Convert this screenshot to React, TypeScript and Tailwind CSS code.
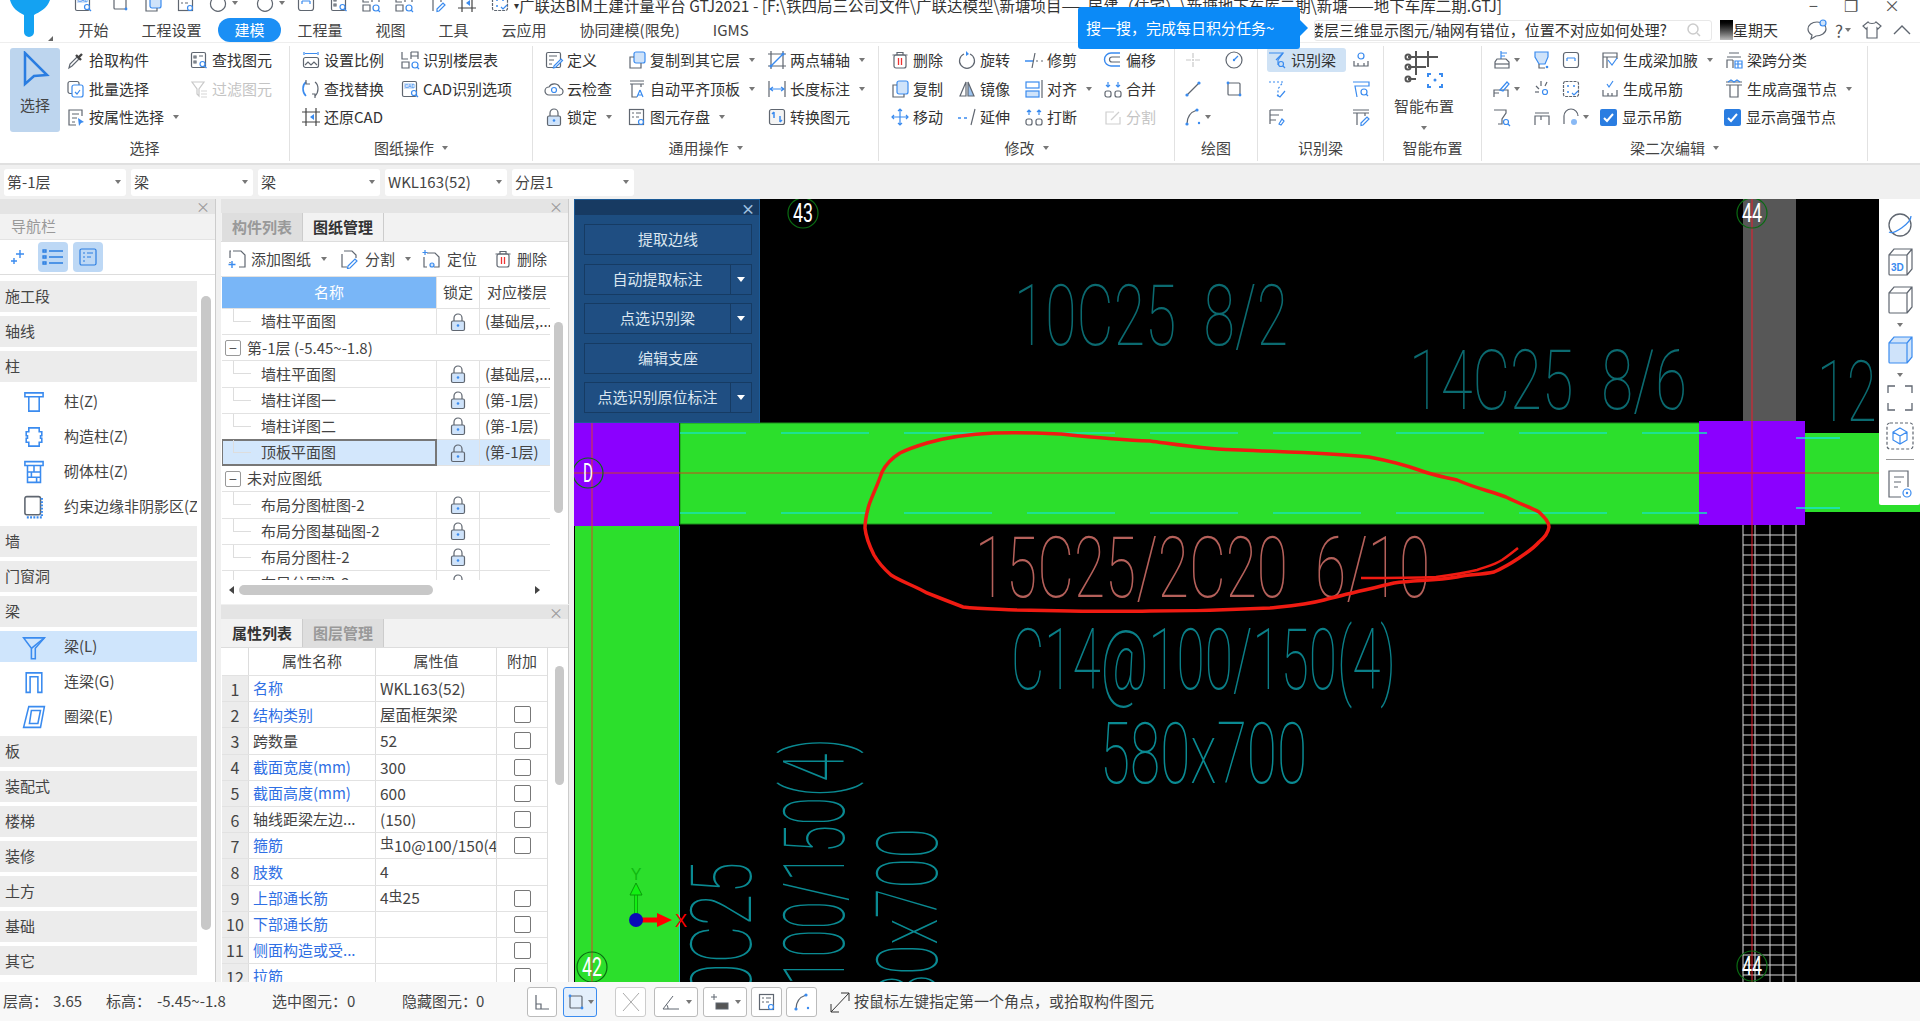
import type { ReactNode } from "react";

const G = "#5f6670";
const B = "#3a8bef";
const L = "#cfe3fa";

const paths: Record<string, ReactNode> = {
  pick: (<><path d="M3 18l1-4 7-7 2 2-7 7z" stroke={G} /><path d="M10 5l5 5M13 7l3-3" stroke="#444" strokeWidth="2.4" /></>),
  find: (<><rect x="2.5" y="2.5" width="14" height="15" rx="1.5" stroke={G} /><path d="M5 6h2v2H5zM10 6h4M5 11h2v2H5z" stroke={G} /><circle cx="13.5" cy="14" r="2.5" stroke={B} /><path d="M15.5 16l2 2" stroke={B} /></>),
  batch: (<><rect x="2" y="2.5" width="11" height="12" rx="2" stroke={G} /><rect x="6" y="6" width="11" height="12" rx="2" stroke={B} fill="#fff" /><path d="M9 13l2 2 3-4" stroke={B} /></>),
  filter: (<><path d="M3 3h12l-5 7v7l-2-2v-5z" stroke="#c9c9c9" /><path d="M12 12h6M12 15h6M12 18h6" stroke="#d5d5d5" /></>),
  attr: (<><path d="M16 9V3H3v15h7" stroke={G} /><path d="M6 7h7M6 11h5M6 15h3" stroke={G} /><path d="M12 11l6 4-3 1-2 3z" fill={B} /></>),
  scale: (<><path d="M3 2v3M17 2v3M4 3.5h12" stroke={B} /><rect x="2.5" y="7.5" width="15" height="10" rx="2" stroke={G} /><path d="M4 15l3-3 3 3 3-3 3 3" stroke={G} /></>),
  floorTable: (<><path d="M2 2v7h6M11 2h7v7M11 2v7M2 18v-6h7v6zM11 6h7" stroke={G} /><circle cx="15" cy="15" r="3" stroke={B} /><path d="M17 17l2 2" stroke={B} /></>),
  replace: (<><path d="M5 3C1 6 1 13 5 17" stroke={B} strokeWidth="1.6" /><path d="M14 3c4 3 4 10 0 14" stroke={G} /><path d="M5 1v4H9M14 19v-4h-3" stroke={G} /></>),
  cadOpt: (<><rect x="2.5" y="2.5" width="14" height="15" rx="1.5" stroke={G} /><rect x="4" y="4" width="10" height="6" fill={L} /><text x="4.5" y="9" fontSize="5" fill={B} fontFamily="Liberation Sans">CAD</text><circle cx="14" cy="14" r="2.5" stroke={B} /><path d="M16 16l2 2" stroke={B} /></>),
  restore: (<><path d="M1 5h18M1 15h18M5 1v18M15 1v18" stroke="#444" /><path d="M13 7l-4 3 4 3z" fill={B} /></>),
  define: (<><rect x="2.5" y="2.5" width="14" height="15" rx="1.5" stroke={G} /><path d="M5 6h8M5 10h5M5 14h3" stroke={G} /><path d="M10 16l7-7 1.500 1.500-7 7-2 .5z" stroke={B} fill="#fff" /></>),
  cloud: (<><path d="M5 16a4 4 0 0 1 0-8 6 6 0 0 1 11 1 3.500 3.500 0 0 1-1 7z" stroke={G} /><circle cx="10" cy="11" r="2.500" stroke={B} /></>),
  lock: (<><path d="M6 9V6a4 4 0 0 1 8 0v3" stroke={G} /><rect x="3.500" y="9" width="13" height="9.500" rx="1.500" stroke={G} fill={L} /><circle cx="10" cy="13.500" r="1.300" fill={B} /></>),
  copyLayer: (<><rect x="7" y="2" width="11" height="11" rx="2" stroke={B} fill={L} /><path d="M7 7H3v11h11v-5" stroke={G} /></>),
  autoTop: (<><path d="M3 2h14M3 5h14M5 5v13h5M14 5v3" stroke={G} /><path d="M13 11l-3 7M13 11l3 7M11 16h4" stroke={B} /></>),
  save: (<><rect x="2.500" y="2.500" width="14" height="15" stroke={G} /><path d="M5 6h2M9 6h5M5 10h2M9 10h3" stroke={G} /><circle cx="14" cy="15" r="2.500" stroke={B} /></>),
  twoAxis: (<><path d="M4 1v18M16 1v18M1 4h18M1 16h18" stroke={G} /><path d="M4 16L16 4" stroke={B} strokeWidth="1.500" /><circle cx="4" cy="16" r="1.500" fill={B} /><circle cx="16" cy="4" r="1.500" fill={B} /></>),
  dim: (<><path d="M2 2v16M18 2v16" stroke={G} /><path d="M3 10h14M6 8l-3 2 3 2M14 8l3 2-3 2" stroke={B} /></>),
  convert: (<><rect x="2.500" y="2.500" width="15" height="15" rx="2" stroke={G} fill="#f4f4f4" /><path d="M7 5v6M5 7l2-2M13 15V9M15 13l-2 2" stroke={B} strokeWidth="1.500" /></>),
  del: (<><rect x="4" y="5" width="12" height="13" rx="2" stroke={G} /><path d="M2.500 5h15M7 5V2.500h6V5" stroke={G} /><path d="M8.500 8v7M11.500 8v7" stroke="#e33" strokeWidth="1.300" /></>),
  rotate: (<><path d="M7 4a7.500 7.500 0 1 0 6 0" stroke={G} /><path d="M9 1l3 3-3 2z" fill={B} /></>),
  trim: (<><path d="M1 11h8" stroke={B} strokeWidth="1.500" /><path d="M12 11h2M17 11h2" stroke={G} /><path d="M11 3L8 18" stroke={G} /></>),
  offset: (<><path d="M17 3H8a6 6 0 0 0 0 13h9" stroke={B} strokeWidth="1.400" /><path d="M17 7H9a2.500 2.500 0 0 0 0 5h8" stroke={G} /></>),
  copy: (<><rect x="7" y="2" width="11" height="13" rx="2" stroke={B} fill={L} /><path d="M7 6H3v12h11v-3" stroke={G} /></>),
  mirror: (<><path d="M9 3L3 17h6z" stroke={G} /><path d="M11 3l6 14h-6z" fill="#9bc2ee" stroke={G} /></>),
  align: (<><rect x="2" y="3" width="13" height="6" stroke={B} /><rect x="2" y="12" width="13" height="6" stroke={B} fill={L} /><path d="M18 1v18" stroke={G} /></>),
  merge: (<><rect x="2" y="12" width="6" height="6" rx="2" stroke={G} /><rect x="12" y="12" width="6" height="6" rx="2" stroke={G} /><path d="M5 3v5M15 3v5M3 6l2 2 2-2M13 6l2 2 2-2" stroke={B} /></>),
  move: (<><path d="M10 2v16M2 10h16M8 4l2-2 2 2M8 16l2 2 2-2M4 8l-2 2 2 2M16 8l2 2-2 2" stroke={B} /></>),
  extend: (<><path d="M1 11h3M7 11h3" stroke={B} strokeWidth="1.400" /><path d="M18 2l-4 16" stroke={G} /></>),
  breakIt: (<><rect x="2" y="12" width="6" height="6" rx="2" stroke={G} /><rect x="12" y="12" width="6" height="6" rx="2" stroke={G} /><path d="M5 8V3M15 8V3M3 5l2-2 2 2M13 5l2-2 2 2" stroke={B} /></>),
  split: (<><path d="M17 10v7H3V5h8" stroke="#cfcfcf" /><path d="M8 13l8-8" stroke="#cfcfcf" /></>),
  point: (<><path d="M10 3v5M10 12v5M3 10h5M12 10h5" stroke="#c8c8c8" /><circle cx="10" cy="10" r="1" fill="#c8c8c8" /></>),
  gauge: (<><circle cx="10" cy="10" r="8" stroke={G} /><path d="M10 10l4-4" stroke={B} /><circle cx="10" cy="10" r="1.200" fill={B} /></>),
  line: (<><path d="M4 16L16 4" stroke={G} /><circle cx="4" cy="16" r="1.600" fill={B} /><circle cx="16" cy="4" r="1.600" fill={B} /></>),
  rect: (<><rect x="4" y="4" width="12" height="12" rx="1" stroke={G} /><circle cx="4" cy="4" r="1.400" fill={B} /><circle cx="16" cy="16" r="1.400" fill={B} /></>),
  arc: (<><path d="M4 17C4 10 8 5 14 3" stroke={G} /><circle cx="4" cy="17" r="1.600" fill={B} /><circle cx="14" cy="3" r="1.600" fill={B} /><circle cx="16" cy="16" r="1.200" fill={B} /></>),
  beamIcon: (<><path d="M2 3h16l-7 8v8H8v-8z" stroke={B} /><path d="M8 11L18 3" stroke={B} /></>),
  beamFind: (<><path d="M2 3h14l-5 7v5" stroke={B} /><path d="M9 10L16 3" stroke={B} /><circle cx="14" cy="14" r="2.500" stroke={B} /><path d="M16 16l2 2" stroke={B} /></>),
  beamDash: (<><path d="M2 3h14l-5 7v8" stroke={B} strokeDasharray="2 2" /><path d="M10 16l3 2 5-6" stroke={B} /></>),
  beamList: (<><path d="M3 3v14M3 3h13M3 8h9M3 13h6" stroke={G} /><path d="M12 17l3-5 2 2-3 4z" stroke={B} /></>),
  support: (<><circle cx="10" cy="6" r="3" stroke={B} /><path d="M3 11v5h14v-5M7 16v-3M13 16v-3" stroke={G} /></>),
  drawFind: (<><path d="M2 3h16v4H4l2 11" stroke={B} /><circle cx="13" cy="13" r="3" stroke={B} /><path d="M15 15l2 2" stroke={B} /></>),
  pen: (<><path d="M2 3h16M2 6h16M6 6v12M14 6v3" stroke={G} /><path d="M10 16l6-6 2 2-6 6-2 .5z" stroke={B} /></>),
  haunch: (<><path d="M3 18V3h14v6M3 7h14M7 7v11" stroke={G} /><path d="M8 10l4 5 5-7" stroke={B} /></>),
  colBlue: (<><path d="M3 2h13v5l-3 7H7L3 7z" stroke={B} fill={L} /><path d="M7 14v4h6" stroke={G} /><circle cx="15" cy="17" r="1.300" fill={B} /></>),
  layerBox: (<><rect x="2.500" y="2.500" width="15" height="15" rx="2.500" stroke={G} /><path d="M6 8h8M6 8v3M14 8v3" stroke={B} /></>),
  flagBox: (<><path d="M9 1v8M9 3l6 0M9 6l4 0" stroke={B} /><path d="M5 9h9l3 3v6H3v-6z" stroke={G} /><path d="M3 14h14" stroke={G} /></>),
  hammer: (<><path d="M2 18v-7h14v7M2 14h5" stroke={G} /><path d="M8 11l7-8 2 2-6 7z" stroke={B} /></>),
  spark: (<><path d="M4 7l3 3M15 3l-2 4M9 2v5" stroke={G} /><circle cx="13" cy="13" r="2.500" stroke={B} /><path d="M3 13h4" stroke={G} /></>),
  dots: (<><rect x="2.500" y="2.500" width="15" height="15" rx="2" stroke={G} strokeDasharray="3 1" /><circle cx="7" cy="7" r="1" fill={B} /><circle cx="13" cy="7" r="1" fill={B} /><circle cx="7" cy="13" r="1" fill={B} /><path d="M11 14l2 2 4-4" stroke={B} /></>),
  hang: (<><path d="M3 11v6h14v-6M8 17v-3M12 17v-3" stroke={G} /><path d="M7 5l2 3 4-6" stroke={B} /></>),
  tBeam: (<><path d="M2 3h16M2 6h16M6 6v12h8V6" stroke={G} /><path d="M4 3l3-2 3 2 3-2 3 2" stroke={B} /></>),
  hBeam: (<><path d="M3 7h14M5 3h10M3 18v-8h6M9 10v8" stroke={G} /><path d="M11 11h7v7h-7zM11 14h7M14 11v7" stroke={B} /></>),
  arch: (<><path d="M3 17V9a7 7 0 0 1 14 0" stroke={G} /><circle cx="13" cy="15" r="3" fill={B} opacity=".6" /></>),
  funnelFind: (<><path d="M2 3h12v3l-4 6v5H6" stroke={G} /><circle cx="14" cy="15" r="2.500" stroke={B} /><path d="M16 17l2 2" stroke={B} /></>),
  floorBeam: (<><path d="M3 6h14M3 18v-9h14v9M9 9v4" stroke={G} /></>),
  addSheet: (<><path d="M6 2h8l4 4v12h-6M3 9V2h1M3 13v1" stroke={G} /><path d="M5 12v7M1.500 15.500h7" stroke={B} strokeWidth="1.400" /></>),
  cutSheet: (<><path d="M5 2h8l4 4v3M3 5v13h5" stroke={G} /><path d="M9 17l7-7 2 2-7 7-2.500.5z" stroke={B} /></>),
  locate: (<><path d="M6 4h8l4 4v10h-5M3 8v10h3" stroke={G} /><path d="M4 1v5M1.500 3.500h5" stroke={B} /><circle cx="11" cy="16" r="2" fill={L} stroke={B} /></>),
  colT: (<><path d="M3 3h14v3H3zM6 6v11h8V6" stroke={B} /></>),
  colBump: (<><path d="M6 3h8v3h2v3h-1v2h1v3h-2v3H6v-3H4v-3h1V9H4V6h2z" stroke={B} /></>),
  colBrick: (<><path d="M3 2h14v3H3zM5 5v13h10V5M5 10h10M5 14h10M10 5v5M8 10v4M12 14v4" stroke={B} /></>),
  colEdge: (<><rect x="3" y="2" width="12" height="14" rx="1.500" stroke={G} /><path d="M16 3v15H4" stroke={B} strokeWidth="1.800" strokeDasharray="1.500 1" /></>),
  beamLink: (<><path d="M4 18V3h12v15h-3V6H7v12z" stroke={B} /></>),
  beamRing: (<><path d="M6 2h12l-3 16H2zM8 5h7l-2 10H6.500z" stroke={B} /></>),
  corner: (<><path d="M4 3v14h13M4 12h5v5" stroke={G} /></>),
};

function Icon({ name, size = 20 }: { name: string; size?: number }) {
  return (
    <svg width={size} height={size} viewBox="0 0 20 20" fill="none" strokeWidth="1.200" className="shrink-0">
      {paths[name]}
    </svg>
  );
}

function Caret({ className = "" }: { className?: string }) {
  return <span className={`inline-block w-0 h-0 border-x-[3.500px] border-x-transparent border-t-[4px] border-t-[#777] ${className}`} />;
}

function Item({ icon, label, caret, disabled }: { icon: string; label: string; caret?: boolean; disabled?: boolean }) {
  return (
    <div className={`flex items-center gap-[3px] whitespace-nowrap ${disabled ? "text-[#c4c4c4]" : "text-[#333]"}`}>
      <Icon name={icon} />
      <span>{label}</span>
      {caret && <Caret className="ml-[6px]" />}
    </div>
  );
}

function Glyph({ icon, caret }: { icon: string; caret?: boolean }) {
  return (
    <div className="flex items-center gap-[2px]">
      <Icon name={icon} />
      {caret && <Caret />}
    </div>
  );
}

function Group({ width, label, caret, children }: { width: string; label: string; caret?: boolean; children: ReactNode }) {
  return (
    <section className={`${width} shrink-0 h-[115px] mt-[3px] border-r border-[#e2e2e2] flex flex-col`}>
      <div className="h-[89px]">{children}</div>
      <div className="flex-1 flex items-center justify-center gap-[8px] text-[#444]">
        {label}
        {caret && <Caret />}
      </div>
    </section>
  );
}

function Combo({ value }: { value: string }) {
  return (
    <div className="w-[122px] h-[27px] bg-white rounded-[3px] flex items-center justify-between pl-[3px] pr-[5px] text-[15px] text-[#444]">
      <span>{value}</span>
      <Caret />
    </div>
  );
}

function SectionRow({ label }: { label: string }) {
  return <div className="h-[31px] mb-[4px] bg-[#ececec] flex items-center pl-[5px] text-[#444]">{label}</div>;
}

function NavItem({ icon, label, active }: { icon: string; label: string; active?: boolean }) {
  return (
    <div className={`h-[31px] mb-[4px] flex items-center pl-[21px] gap-[17px] whitespace-nowrap overflow-hidden text-[#444] ${active ? "bg-[#cfe5fc]" : ""}`}>
      <Icon name={icon} size={26} />
      <span>{label}</span>
    </div>
  );
}

function PanelStrip() {
  return (
    <div className="h-[14px] bg-[#e4e4e4] flex items-center justify-end pr-[5px] text-[#999] text-[14px] leading-none">×</div>
  );
}

function Tabs({ items, active }: { items: string[]; active: number }) {
  return (
    <div className="h-[29px] flex items-stretch bg-[#f2f2f2] border-b border-[#ddd] pl-[1px]">
      {items.map((t, i) => (
        <div
          key={t}
          className={`w-[81px] flex items-center justify-center font-bold text-[15px] border-r border-[#ccc] ${i === active ? "bg-[#f2f2f2] text-[#333]" : "bg-[#dedede] text-[#999]"}`}
        >
          {t}
        </div>
      ))}
    </div>
  );
}

function DrawingRow({ name, floor, selected }: { name: string; floor?: string; selected?: boolean }) {
  return (
    <div className={`h-[26.200px] flex border-b border-[#e2e2e2] text-[#444] ${selected ? "bg-[#d3e7fc]" : ""}`}>
      <div className={`w-[214px] flex items-center pl-[39px] relative ${selected ? "outline-2 -outline-offset-1 outline-[#777]" : ""}`}>
        <span className="absolute left-[11px] top-0 h-[13px] w-[18px] border-l border-b border-[#ddd]" />
        {name}
      </div>
      <div className="w-[44px] flex items-center justify-center border-x border-[#e2e2e2]">
        <Icon name="lock" />
      </div>
      <div className="w-[70px] flex items-center pl-[5px] whitespace-nowrap overflow-hidden">{floor}</div>
    </div>
  );
}

function TreeGroup({ label }: { label: string }) {
  return (
    <div className="h-[26.200px] flex items-center gap-[6px] pl-[3px] border-b border-[#e2e2e2] text-[#444]">
      <span className="w-[16px] h-[16px] border border-[#999] rounded-[2px] flex items-center justify-center leading-none text-[14px] text-[#555]">−</span>
      {label}
    </div>
  );
}

function Rebar() {
  return <span className="text-[14px] relative -top-[3px]">虫</span>;
}

const props: [string, boolean, ReactNode, boolean][] = [
  ["名称", true, "WKL163(52)", false],
  ["结构类别", true, "屋面框架梁", true],
  ["跨数量", false, "52", true],
  ["截面宽度(mm)", true, "300", true],
  ["截面高度(mm)", true, "600", true],
  ["轴线距梁左边...", false, "(150)", true],
  ["箍筋", true, <><Rebar />10@100/150(4)</>, true],
  ["肢数", true, "4", false],
  ["上部通长筋", true, <>4<Rebar />25</>, true],
  ["下部通长筋", true, "", true],
  ["侧面构造或受...", true, "", true],
  ["拉筋", true, "", true],
];

function CadText({ x, y, w, h, color, text }: { x: number; y: number; w: number; h: number; color: string; text: string }) {
  return (
    <text x={x} y={y} fontSize={h / 0.711} textLength={w} lengthAdjust="spacingAndGlyphs" fontFamily="Roboto, sans-serif" fontWeight={100} fill={color}>
      {text}
    </text>
  );
}

function VCadText({ x, top, len, color, text }: { x: number; top: number; len: number; color: string; text: string }) {
  return (
    <g transform={`translate(${x} ${top}) rotate(-90)`}>
      <CadText x={-len} y={0} w={len} h={60} color={color} text={text} />
    </g>
  );
}

function AxisMark({ x, y, text }: { x: number; y: number; text: string }) {
  return (
    <g>
      <circle cx={x} cy={y} r={15} fill="none" stroke="#0a6b12" strokeWidth="1.200" />
      <text x={x} y={y + 9} textAnchor="middle" fontSize="25" textLength={text.length * 10} lengthAdjust="spacingAndGlyphs" fontFamily="Roboto, sans-serif" fill="#fff">
        {text}
      </text>
    </g>
  );
}

function Drawing() {
  const gridY = Array.from({ length: 46 }, (_, i) => 535 + i * 10);
  return (
    <svg viewBox="574 199 1346 783" className="block w-[1346px] h-[783px]">
      <rect x="1743" y="199" width="53" height="223" fill="#575757" />
      <rect x="680" y="423" width="1020" height="101" fill="#2cdf2c" stroke="#1c8f1c" />
      <rect x="1805" y="433" width="115" height="79" fill="#2cdf2c" />
      <rect x="575" y="526" width="104" height="456" fill="#2cdf2c" />
      <line x1="679.500" y1="526" x2="679.500" y2="982" stroke="#22d3c5" />
      <rect x="574" y="423" width="105" height="103" fill="#8b00ff" />
      <rect x="1699" y="421" width="106" height="104" fill="#8b00ff" />

      {[1743, 1755, 1770, 1783, 1796].map((x) => (
        <line key={x} x1={x} y1="525" x2={x} y2="982" stroke="#d8d8d8" />
      ))}
      {gridY.map((y) => (
        <line key={y} x1="1743" y1={y} x2="1796" y2={y} stroke="#d8d8d8" />
      ))}

      <line x1="680" y1="433" x2="1707" y2="433" stroke="#19e3b5" strokeWidth="1.500" strokeDasharray="88 35" strokeDashoffset="22" />
      <line x1="680" y1="513" x2="1707" y2="513" stroke="#19e3b5" strokeWidth="1.500" strokeDasharray="88 35" strokeDashoffset="22" />
      <line x1="1796" y1="438" x2="1840" y2="438" stroke="#19e3d5" strokeWidth="1.500" />
      <line x1="1796" y1="508" x2="1840" y2="508" stroke="#19e3d5" strokeWidth="1.500" />

      <line x1="574" y1="473" x2="1920" y2="473" stroke="#c8481c" />
      <line x1="592" y1="423" x2="592" y2="982" stroke="#d8442a" />
      <line x1="1752" y1="199" x2="1752" y2="982" stroke="#ee1c2c" />
      <line x1="1699" y1="473" x2="1805" y2="473" stroke="#e0104a" />

      <CadText x={1014} y={345} w={274} h={60} color="#0b6a70" text={"10C25\u00A0\u00A08/2"} />
      <CadText x={1409} y={409} w={278} h={59} color="#0b6a70" text={"14C25\u00A0\u00A08/6"} />
      <CadText x={1817} y={421} w={95} h={60} color="#0b6a70" text="12C" />
      <CadText x={975} y={597} w={455} h={60} color="#b5605a" text={"15C25/2C20\u00A0\u00A06/10"} />
      <CadText x={1011} y={689} w={385} h={60} color="#0a7f88" text="C14@100/150(4)" />
      <CadText x={1100} y={783} w={207} h={61} color="#0a8a92" text="580x700" />
      <VCadText x={751} top={862} len={165} color="#0a8a92" text="10C25" />
      <VCadText x={844} top={738} len={385} color="#0a8a92" text="C14@100/150(4)" />
      <VCadText x={937} top={828} len={207} color="#0a8a92" text="580x700" />

      <path
        d="M994 433C1020 432 1040 433 1061 434C1090 437 1120 440 1150 441C1180 445 1210 450 1240 450C1285 452 1330 453 1369 457C1390 461 1405 465 1419 470C1435 476 1445 477 1457 480C1475 488 1490 491 1506 497C1520 504 1532 508 1539 512C1545 518 1549 522 1549 527C1548 534 1544 538 1539 542C1532 550 1527 552 1519 558C1510 564 1503 568 1494 572C1480 575 1470 574 1457 577C1435 581 1415 580 1394 583C1370 589 1345 594 1324 600C1305 605 1290 606 1270 608C1230 610 1190 611 1150 611C1105 612 1060 611 1016 610C996 609 980 609 963 607C950 602 940 598 927 593C915 586 902 582 891 575C883 568 878 562 874 555C869 545 866 538 865 528C865 520 867 512 869 505C873 494 878 484 882 472C886 464 892 458 900 453C908 449 917 446 927 443C948 437 970 434 994 433Z"
        fill="none"
        stroke="#f01b12"
        strokeWidth="3.500"
      />
      <path d="M1361 578C1385 578 1410 578 1436 577C1452 575 1465 573 1477 570C1488 566 1494 565 1502 560C1508 556 1513 552 1518 548" fill="none" stroke="#f01b12" strokeWidth="2.500" />

      <AxisMark x={803} y={213} text="43" />
      <AxisMark x={1752} y={213} text="44" />
      <AxisMark x={588} y={473} text="D" />
      <AxisMark x={592} y={967} text="42" />
      <AxisMark x={1752} y={966} text="44" />

      <path d="M636 917V892" stroke="#0a9a0a" strokeWidth="4" />
      <path d="M636 917V892" stroke="#13f013" strokeWidth="2.500" />
      <path d="M636 883l-6 12h12z" fill="#13f013" stroke="#0a9a0a" />
      <text x="636" y="880" textAnchor="middle" fontSize="16" fontFamily="Liberation Sans, sans-serif" fill="#11b911">Y</text>
      <path d="M640 920h18" stroke="#f00" strokeWidth="5" />
      <path d="M657 913l15 7-15 7z" fill="#f00" />
      <text x="681" y="927" textAnchor="middle" fontSize="18" fontFamily="Liberation Sans, sans-serif" fill="#f00">X</text>
      <circle cx="636" cy="920" r="7" fill="#0a0ab8" />
    </svg>
  );
}

function FloatBtn({ label, split }: { label: string; split?: boolean }) {
  return (
    <div className="h-[31px] mb-[8.500px] flex bg-[#1f4e82] border border-[#163b63] text-[#dbe6f0] text-[15px]">
      <div className="flex-1 flex items-center justify-center">{label}</div>
      {split && (
        <div className="w-[21px] border-l border-[#163b63] flex items-center justify-center">
          <span className="w-0 h-0 border-x-[4px] border-x-transparent border-t-[5px] border-t-white" />
        </div>
      )}
    </div>
  );
}

function ViewBox({ fill, label }: { fill?: boolean; label?: string }) {
  return (
    <svg width="28" height="30" viewBox="0 0 28 30" fill="none" strokeWidth="1.200">
      <path d="M3 8h18v20H4a1 1 0 0 1-1-1zM3 8l5-6h18v20l-5 6M21 8l5-6" stroke={fill ? B : G} fill={fill ? L : "none"} />
      {label && <text x="5" y="24" fontSize="10" fontWeight="700" fill={B} fontFamily="Liberation Sans, sans-serif">{label}</text>}
    </svg>
  );
}

const quick: { icon: string; w: string; caret?: boolean }[] = [
  { icon: "cadOpt", w: "w-[37px]" },
  { icon: "rect", w: "w-[33px]" },
  { icon: "copy", w: "w-[33px]" },
  { icon: "save", w: "w-[32px]" },
  { icon: "rotate", w: "w-[47px]", caret: true },
  { icon: "rotate", w: "w-[41px]", caret: true },
  { icon: "layerBox", w: "w-[33px]" },
  { icon: "find", w: "w-[32px]" },
  { icon: "floorTable", w: "w-[33px]" },
  { icon: "floorTable", w: "w-[33px]" },
  { icon: "pen", w: "w-[30px]" },
  { icon: "restore", w: "w-[33px]" },
  { icon: "dots", w: "w-[24px]" },
];

export default function App() {
  return (
    <div className="w-[1920px] h-[1021px] overflow-hidden flex flex-col bg-[#f0f0f0] text-[15px] font-['Noto_Sans_CJK_SC',sans-serif] relative">
      <header className="h-[42px] bg-white flex shrink-0">
        <div className="w-[62px] shrink-0 relative">
          <svg width="62" height="42" viewBox="0 0 62 42">
            <path d="M10 0H50C47 9 39 12 34 15V32a5 5 0 0 1-10 0V15C18 12 12 8 10 0z" fill="#14a2f2" />
            <path d="M53 41h-5l5-5z" fill="#666" />
          </svg>
        </div>
        <div className="flex-1 flex flex-col min-w-0">
          <div className="h-[18px] flex items-start overflow-hidden pl-[11px] relative">
            <div className="flex -mt-[7px] shrink-0">
              {quick.map((q, i) => (
                <div key={i} className={`${q.w} flex items-center gap-[4px] shrink-0`}>
                  <Icon name={q.icon} />
                  {q.caret && <Caret />}
                </div>
              ))}
            </div>
            <span className="-mt-[6px] text-[#333] text-[15.500px] whitespace-nowrap leading-[22px]">
              <span className="text-[10px] align-top">▾</span>广联达BIM土建计量平台 GTJ2021 - [F:\铁四局三公司文件\广联达模型\新塘项目——房建（住宅）\新塘地下车库二期\新塘——地下车库二期.GTJ]
            </span>
            <div className="ml-auto flex gap-[26px] pr-[20px] text-[#555] leading-none -mt-[3px] text-[16px]">
              <span>−</span>
              <span>❐</span>
              <span>×</span>
            </div>
          </div>
          <div className="h-[24px] flex items-center">
            {["开始", "工程设置", "建模", "工程量", "视图", "工具", "云应用", "协同建模(限免)", "IGMS"].map((t) => (
              <div key={t} className={`px-[16.500px] h-[24px] flex items-center rounded-full whitespace-nowrap ${t === "建模" ? "bg-[#1b8ff5] text-white" : "text-[#444]"}`}>
                {t}
              </div>
            ))}
            <div className="ml-auto flex items-center pr-[8px]">
              <div className="w-[398px] h-[21px] border border-[#e8e8e8] rounded-[3px] flex items-center overflow-hidden text-[#333]">
                <span className="-ml-[6px] whitespace-nowrap flex-1">楼层三维显示图元/轴网有错位，位置不对应如何处理?</span>
                <svg width="16" height="16" viewBox="0 0 16 16" fill="none" stroke="#ccc" strokeWidth="1.500" className="mr-[9px]">
                  <circle cx="7" cy="7" r="5" />
                  <path d="M11 11l3 3" />
                </svg>
              </div>
              <span className="ml-[8px] w-[13px] h-[20px] bg-gradient-to-b from-black to-[#bbb]" />
              <span className="w-[47px] text-[#333]">星期天</span>
              <svg width="24" height="24" viewBox="0 0 24 24" fill="none" stroke={G} strokeWidth="1.200" className="ml-[25px]">
                <path d="M12 4c-5 0-9 3-9 7 0 2.500 1.500 4.500 4 6l-1 4 5-3c5 0 10-3 10-7 0-4-4-7-9-7z" />
                <circle cx="18" cy="5" r="3" fill="#cfe3fa" stroke={B} />
              </svg>
              <span className="ml-[6px] text-[#555] text-[17px] leading-none">?</span>
              <Caret className="ml-[2px]" />
              <svg width="22" height="22" viewBox="0 0 22 22" fill="none" stroke={G} strokeWidth="1.200" className="ml-[10px]">
                <path d="M7 3L2 7l3 3 1-1v10h10V9l1 1 3-3-5-4c-1 2-7 2-8 0z" />
              </svg>
              <svg width="20" height="20" viewBox="0 0 20 20" fill="none" stroke={G} strokeWidth="1.400" className="ml-[9px]">
                <path d="M2 14l8-8 8 8" />
              </svg>
            </div>
          </div>
        </div>
      </header>

      <div className="absolute left-[1078px] top-[7px] w-[222px] h-[42px] bg-[#0b8af7] rounded-[3px] flex items-center pl-[8px] text-white z-10">
        搜一搜，完成每日积分任务~
        <span className="absolute -right-[8px] top-[13px] w-0 h-0 border-y-[8px] border-y-transparent border-l-[8px] border-l-[#0b8af7]" />
      </div>

      <div className="h-[121px] bg-white flex shrink-0 border-t border-[#eee]">
        <Group width="w-[290px]" label="选择">
          <div className="flex pl-[10px] pt-[2px]">
            <div className="w-[50px] h-[84px] bg-[#bdd5ee] rounded-[3px] flex flex-col items-center pt-[3px] text-[#444]">
              <svg width="30" height="36" viewBox="0 0 30 36" fill="none" stroke="#2a7de1" strokeWidth="2.500">
                <path d="M5 2v31l9-8 13-1z" />
              </svg>
              <span className="mt-[7px]">选择</span>
            </div>
            <div className="ml-[6px] -mt-[2px] grid grid-cols-[123px_1fr] auto-rows-[28.500px] items-center">
              <Item icon="pick" label="拾取构件" />
              <Item icon="find" label="查找图元" />
              <Item icon="batch" label="批量选择" />
              <Item icon="filter" label="过滤图元" disabled />
              <Item icon="attr" label="按属性选择" caret />
            </div>
          </div>
        </Group>
        <Group width="w-[243px]" label="图纸操作" caret>
          <div className="pl-[11px] grid grid-cols-[99px_1fr] auto-rows-[28.500px] items-center">
            <Item icon="scale" label="设置比例" />
            <Item icon="floorTable" label="识别楼层表" />
            <Item icon="replace" label="查找替换" />
            <Item icon="cadOpt" label="CAD识别选项" />
            <Item icon="restore" label="还原CAD" />
          </div>
        </Group>
        <Group width="w-[346px]" label="通用操作" caret>
          <div className="pl-[11px] grid grid-cols-[83px_140px_1fr] auto-rows-[28.500px] items-center">
            <Item icon="define" label="定义" />
            <Item icon="copyLayer" label="复制到其它层" caret />
            <Item icon="twoAxis" label="两点辅轴" caret />
            <Item icon="cloud" label="云检查" />
            <Item icon="autoTop" label="自动平齐顶板" caret />
            <Item icon="dim" label="长度标注" caret />
            <Item icon="lock" label="锁定" caret />
            <Item icon="save" label="图元存盘" caret />
            <Item icon="convert" label="转换图元" />
          </div>
        </Group>
        <Group width="w-[296px]" label="修改" caret>
          <div className="pl-[11px] grid grid-cols-[67px_67px_79px_1fr] auto-rows-[28.500px] items-center">
            <Item icon="del" label="删除" />
            <Item icon="rotate" label="旋转" />
            <Item icon="trim" label="修剪" />
            <Item icon="offset" label="偏移" />
            <Item icon="copy" label="复制" />
            <Item icon="mirror" label="镜像" />
            <Item icon="align" label="对齐" caret />
            <Item icon="merge" label="合并" />
            <Item icon="move" label="移动" />
            <Item icon="extend" label="延伸" />
            <Item icon="breakIt" label="打断" />
            <Item icon="split" label="分割" disabled />
          </div>
        </Group>
        <Group width="w-[83px]" label="绘图">
          <div className="pl-[8px] grid grid-cols-[41px_1fr] auto-rows-[28.500px] items-center">
            <Glyph icon="point" />
            <Glyph icon="gauge" />
            <Glyph icon="line" />
            <Glyph icon="rect" />
            <Glyph icon="arc" caret />
          </div>
        </Group>
        <Group width="w-[126px]" label="识别梁">
          <div className="pl-[9px] grid grid-cols-[84px_1fr] auto-rows-[28.500px] items-center">
            <div className="w-[79px] h-[24px] bg-[#cfe2f5] rounded-[3px] flex items-center gap-[4px] text-[#333]">
              <Icon name="beamFind" />
              识别梁
            </div>
            <Glyph icon="support" />
            <Glyph icon="beamDash" />
            <Glyph icon="drawFind" />
            <Glyph icon="beamList" />
            <Glyph icon="pen" />
          </div>
        </Group>
        <Group width="w-[98px]" label="智能布置">
          <div className="flex flex-col items-center w-[80px] text-[#444] pt-[3px]">
            <svg width="40" height="42" viewBox="0 0 40 42" fill="none" stroke="#555" strokeWidth="2">
              <path d="M12 2v24M24 2v16M4 8h30M4 18h18M4 30h8" />
              <circle cx="4" cy="8" r="2.500" />
              <circle cx="4" cy="18" r="2.500" />
              <circle cx="4" cy="30" r="2.500" />
              <path d="M24 28v-3h3M35 25h3v3M38 35v3h-3M27 38h-3v-3" stroke={B} />
              <circle cx="31" cy="31" r="1.500" fill={B} stroke="none" />
            </svg>
            <span className="mt-[4px]">智能布置</span>
            <Caret className="mt-[8px]" />
          </div>
        </Group>
        <Group width="w-[386px]" label="梁二次编辑" caret>
          <div className="pl-[10px] grid grid-cols-[40px_29px_39px_124px_1fr] auto-rows-[28.500px] items-center">
            <Glyph icon="flagBox" caret />
            <Glyph icon="colBlue" />
            <Glyph icon="layerBox" />
            <Item icon="haunch" label="生成梁加腋" caret />
            <Item icon="hBeam" label="梁跨分类" />
            <Glyph icon="hammer" caret />
            <Glyph icon="spark" />
            <Glyph icon="dots" />
            <Item icon="hang" label="生成吊筋" />
            <Item icon="tBeam" label="生成高强节点" caret />
            <Glyph icon="funnelFind" />
            <Glyph icon="floorBeam" />
            <Glyph icon="arch" caret />
            {["显示吊筋", "显示高强节点"].map((t) => (
              <div key={t} className="flex items-center gap-[5px] text-[#333] whitespace-nowrap">
                <span className="w-[17px] h-[17px] bg-[#2a7de1] rounded-[2px] flex items-center justify-center">
                  <svg width="13" height="13" viewBox="0 0 13 13" fill="none" stroke="#fff" strokeWidth="2">
                    <path d="M2 7l3 3 6-7" />
                  </svg>
                </span>
                {t}
              </div>
            ))}
          </div>
        </Group>
      </div>

      <div className="h-[36px] flex items-center gap-[5px] pl-[4px] border-t-2 border-[#e0e0e0] shrink-0">
        {["第-1层", "梁", "梁", "WKL163(52)", "分层1"].map((v, i) => (
          <Combo key={i} value={v} />
        ))}
      </div>

      <main className="h-[783px] flex shrink-0">
        <aside className="w-[216px] shrink-0 bg-white border-r border-[#ccc]">
          <PanelStrip />
          <div className="h-[27px] bg-[#f2f2f2] border-y border-[#e4e4e4] flex items-center pl-[11px] text-[#999]">导航栏</div>
          <div className="h-[35px] flex items-center pl-[8px] border-b border-[#ddd]">
            <svg width="20" height="20" viewBox="0 0 20 20" fill="none" stroke={B} strokeWidth="1.400">
              <path d="M12 3v8M8 7h8M6 11v6M3 14h6" />
            </svg>
            <span className="ml-[10px] w-[30px] h-[30px] bg-[#bdd8f5] rounded-[4px] flex items-center justify-center">
              <svg width="22" height="16" viewBox="0 0 22 16" fill="none" stroke="#2a7de1" strokeWidth="1.300">
                <path d="M7 2h14M7 8h14M7 14h14M1 1h3v2H1zM1 7h3v2H1zM1 13h3v2H1z" />
              </svg>
            </span>
            <span className="ml-[5px] w-[30px] h-[30px] bg-[#bdd8f5] rounded-[4px] flex items-center justify-center">
              <svg width="20" height="20" viewBox="0 0 20 20" fill="none" stroke="#2a7de1" strokeWidth="1.200">
                <rect x="2" y="2" width="16" height="16" rx="1.500" />
                <path d="M5 6h2M9 6h6M5 10h2M9 10h4M5 14h2" />
              </svg>
            </span>
          </div>
          <div className="flex pt-[6px] h-[700px] overflow-hidden">
            <div className="w-[197px] shrink-0">
              <SectionRow label="施工段" />
              <SectionRow label="轴线" />
              <SectionRow label="柱" />
              <NavItem icon="colT" label="柱(Z)" />
              <NavItem icon="colBump" label="构造柱(Z)" />
              <NavItem icon="colBrick" label="砌体柱(Z)" />
              <NavItem icon="colEdge" label="约束边缘非阴影区(Z" />
              <SectionRow label="墙" />
              <SectionRow label="门窗洞" />
              <SectionRow label="梁" />
              <NavItem icon="beamIcon" label="梁(L)" active />
              <NavItem icon="beamLink" label="连梁(G)" />
              <NavItem icon="beamRing" label="圈梁(E)" />
              {["板", "装配式", "楼梯", "装修", "土方", "基础", "其它"].map((s) => (
                <SectionRow key={s} label={s} />
              ))}
            </div>
            <div className="ml-[4px] mt-[15px] w-[10px] h-[634px] bg-[#c8c8c8] rounded-full" />
          </div>
        </aside>

        <div className="w-[348px] ml-[5px] shrink-0 flex flex-col gap-[1px]">
          <section className="h-[405px] bg-white border-r border-[#ccc] overflow-hidden">
            <PanelStrip />
            <Tabs items={["构件列表", "图纸管理"]} active={1} />
            <div className="h-[35px] flex items-center pl-[6px] text-[#444] border-b border-[#e2e2e2]">
              <Icon name="addSheet" />
              <span className="ml-[4px]">添加图纸</span>
              <Caret className="ml-[10px]" />
              <span className="ml-[12px]"><Icon name="cutSheet" /></span>
              <span className="ml-[6px]">分割</span>
              <Caret className="ml-[10px]" />
              <span className="ml-[10px]"><Icon name="locate" /></span>
              <span className="ml-[6px]">定位</span>
              <span className="ml-[16px]"><Icon name="del" /></span>
              <span className="ml-[4px]">删除</span>
            </div>
            <div className="flex">
              <div className="w-[328px] ml-[1px] shrink-0">
                <div className="h-[32px] flex border-b border-[#e2e2e2] text-[#444]">
                  <div className="w-[214px] bg-[#79b6f7] text-white flex items-center justify-center">名称</div>
                  <div className="w-[44px] flex items-center justify-center border-x border-[#e2e2e2]">锁定</div>
                  <div className="w-[70px] flex items-center pl-[7px] whitespace-nowrap overflow-hidden">对应楼层</div>
                </div>
                <div className="h-[271px] overflow-hidden">
                  <DrawingRow name="墙柱平面图" floor="(基础层,..." />
                  <TreeGroup label="第-1层 (-5.45~-1.8)" />
                  <DrawingRow name="墙柱平面图" floor="(基础层,..." />
                  <DrawingRow name="墙柱详图一" floor="(第-1层)" />
                  <DrawingRow name="墙柱详图二" floor="(第-1层)" />
                  <DrawingRow name="顶板平面图" floor="(第-1层)" selected />
                  <TreeGroup label="未对应图纸" />
                  <DrawingRow name="布局分图桩图-2" />
                  <DrawingRow name="布局分图基础图-2" />
                  <DrawingRow name="布局分图柱-2" />
                  <DrawingRow name="布局分图梁-2" />
                </div>
                <div className="h-[20px] flex items-center">
                  <span className="ml-[7px] w-0 h-0 border-y-[4px] border-y-transparent border-r-[5px] border-r-[#444]" />
                  <span className="ml-[5px] w-[194px] h-[10px] rounded-full bg-[#c8c8c8]" />
                  <span className="ml-auto mr-[10px] w-0 h-0 border-y-[4px] border-y-transparent border-l-[5px] border-l-[#444]" />
                </div>
              </div>
              <div className="ml-[4px] mt-[45px] w-[9px] h-[191px] bg-[#c8c8c8] rounded-full" />
            </div>
          </section>

          <section className="flex-1 bg-white border-r border-[#ccc] overflow-hidden">
            <PanelStrip />
            <Tabs items={["属性列表", "图层管理"]} active={0} />
            <div className="flex">
              <div className="w-[326px] ml-[1px] shrink-0 border-r border-[#ddd]">
                <div className="h-[28px] flex items-center text-[#444] border-b border-[#e2e2e2]">
                  <div className="w-[27px] h-full border-r border-[#ddd]" />
                  <div className="w-[127px] h-full border-r border-[#ddd] flex items-center justify-center">属性名称</div>
                  <div className="w-[121px] h-full border-r border-[#ddd] flex items-center justify-center">属性值</div>
                  <div className="flex-1 text-center">附加</div>
                </div>
                {props.map(([name, link, value, check], i) => (
                  <div key={name} className="h-[26.200px] flex border-b border-[#e2e2e2] text-[#444]">
                    <div className="w-[27px] bg-[#ececec] border-r border-[#ddd] flex items-center justify-center text-[16px]">{i + 1}</div>
                    <div className={`w-[127px] border-r border-[#ddd] flex items-center pl-[4px] whitespace-nowrap overflow-hidden ${link ? "text-[#2f6fe4]" : ""}`}>{name}</div>
                    <div className="w-[121px] border-r border-[#ddd] flex items-center pl-[4px] whitespace-nowrap overflow-hidden text-[15.500px]">{value}</div>
                    <div className="flex-1 flex items-center justify-center">
                      {check && <span className="w-[17px] h-[17px] border border-[#777] rounded-[2px]" />}
                    </div>
                  </div>
                ))}
              </div>
              <div className="ml-[7px] mt-[18px] w-[9px] h-[119px] bg-[#c8c8c8] rounded-full" />
            </div>
          </section>
        </div>

        <div className="flex-1 ml-[5px] bg-black relative overflow-hidden">
          <Drawing />
          <div className="absolute left-0 top-0 w-[186px] h-[224px] bg-[#1d4d80] border border-[#1b5a96]">
            <div className="h-[15px] bg-[#173a62] flex items-center justify-end pr-[4px] text-[#9fc0e0] text-[14px] leading-none font-bold">×</div>
            <div className="pt-[9px] pl-[9px] pr-[7px]">
              <FloatBtn label="提取边线" />
              <FloatBtn label="自动提取标注" split />
              <FloatBtn label="点选识别梁" split />
              <FloatBtn label="编辑支座" />
              <FloatBtn label="点选识别原位标注" split />
            </div>
          </div>
          <div className="absolute right-0 top-0 w-[41px] h-[306px] bg-white rounded-b-[2px] flex flex-col items-center pt-[12px] gap-[8px]">
            <svg width="28" height="28" viewBox="0 0 28 28" fill="none" stroke={B} strokeWidth="1.300">
              <circle cx="14" cy="14" r="11" stroke={G} />
              <path d="M3 21C8 24 25 12 25 5" />
            </svg>
            <ViewBox label="3D" />
            <ViewBox />
            <Caret />
            <ViewBox fill />
            <Caret />
            <svg width="26" height="26" viewBox="0 0 26 26" fill="none" stroke={G} strokeWidth="1.300">
              <path d="M1 8V1h7M18 1h7v7M25 18v7h-7M8 25H1v-7" />
            </svg>
            <svg width="28" height="28" viewBox="0 0 28 28" fill="none" strokeWidth="1.200" className="mt-[3px]">
              <rect x="1" y="1" width="26" height="26" rx="3" stroke={G} strokeDasharray="3 2" />
              <path d="M14 6l7 4v8l-7 4-7-4v-8zM7 10l7 4 7-4M14 14v8" stroke={B} />
            </svg>
            <span className="w-[28px] border-t border-[#999] my-[1px]" />
            <svg width="28" height="30" viewBox="0 0 28 30" fill="none" stroke={G} strokeWidth="1.200">
              <path d="M22 18V2H3v26h12" />
              <path d="M8 8h10M8 13h7M8 18h4" />
              <circle cx="21" cy="24" r="4" stroke={B} />
              <circle cx="21" cy="24" r="1.200" fill={B} stroke="none" />
            </svg>
          </div>
        </div>
      </main>

      <footer className="h-[39px] bg-[#f8f8f8] flex items-center text-[#444] shrink-0 whitespace-nowrap">
        <span className="ml-[3px] w-[50px]">层高：</span>
        <span className="w-[53px]">3.65</span>
        <span className="w-[51px]">标高：</span>
        <span className="w-[115px]">-5.45~-1.8</span>
        <span className="w-[75px]">选中图元：</span>
        <span className="w-[55px]">0</span>
        <span className="w-[74px]">隐藏图元：</span>
        <span className="w-[51px]">0</span>
        <div className="w-[30px] h-[30px] border border-[#bbb] rounded-[3px] bg-white flex items-center justify-center"><Icon name="corner" /></div>
        <div className="ml-[6px] w-[34px] h-[30px] border border-[#3a8bef] rounded-[3px] bg-[#e4effb] flex items-center justify-center gap-[2px]"><Icon name="rect" /><Caret /></div>
        <div className="ml-[18px] w-[31px] h-[30px] border border-[#ccc] rounded-[3px] bg-white flex items-center justify-center">
          <svg width="22" height="22" viewBox="0 0 22 22" stroke="#aaa" fill="none"><path d="M3 2l16 18M19 2L3 20" /></svg>
        </div>
        <div className="ml-[8px] w-[44px] h-[30px] border border-[#bbb] rounded-[3px] bg-white flex items-center justify-center gap-[4px]">
          <svg width="22" height="22" viewBox="0 0 22 22" stroke={G} fill="none"><path d="M3 18h16M3 18L13 5M8 18c0-3-1-4-2-5" /></svg>
          <Caret />
        </div>
        <div className="ml-[5px] w-[44px] h-[30px] border border-[#bbb] rounded-[3px] bg-white flex items-center justify-center gap-[4px]">
          <svg width="22" height="22" viewBox="0 0 22 22" stroke={G} fill="none"><path d="M2 6h6M5 3v6" /><rect x="7" y="12" width="12" height="6" fill="#555" /></svg>
          <Caret />
        </div>
        <div className="ml-[4px] w-[31px] h-[30px] border border-[#bbb] rounded-[3px] bg-white flex items-center justify-center"><Icon name="save" /></div>
        <div className="ml-[4px] w-[31px] h-[30px] border border-[#bbb] rounded-[3px] bg-white flex items-center justify-center"><Icon name="arc" /></div>
        <svg width="22" height="24" viewBox="0 0 22 24" stroke="#333" fill="none" className="ml-[12px]">
          <path d="M2 22L20 3M12 3h8v8M2 14v8h8" />
        </svg>
        <span className="ml-[3px] text-[#444]">按鼠标左键指定第一个角点，或拾取构件图元</span>
      </footer>
    </div>
  );
}
